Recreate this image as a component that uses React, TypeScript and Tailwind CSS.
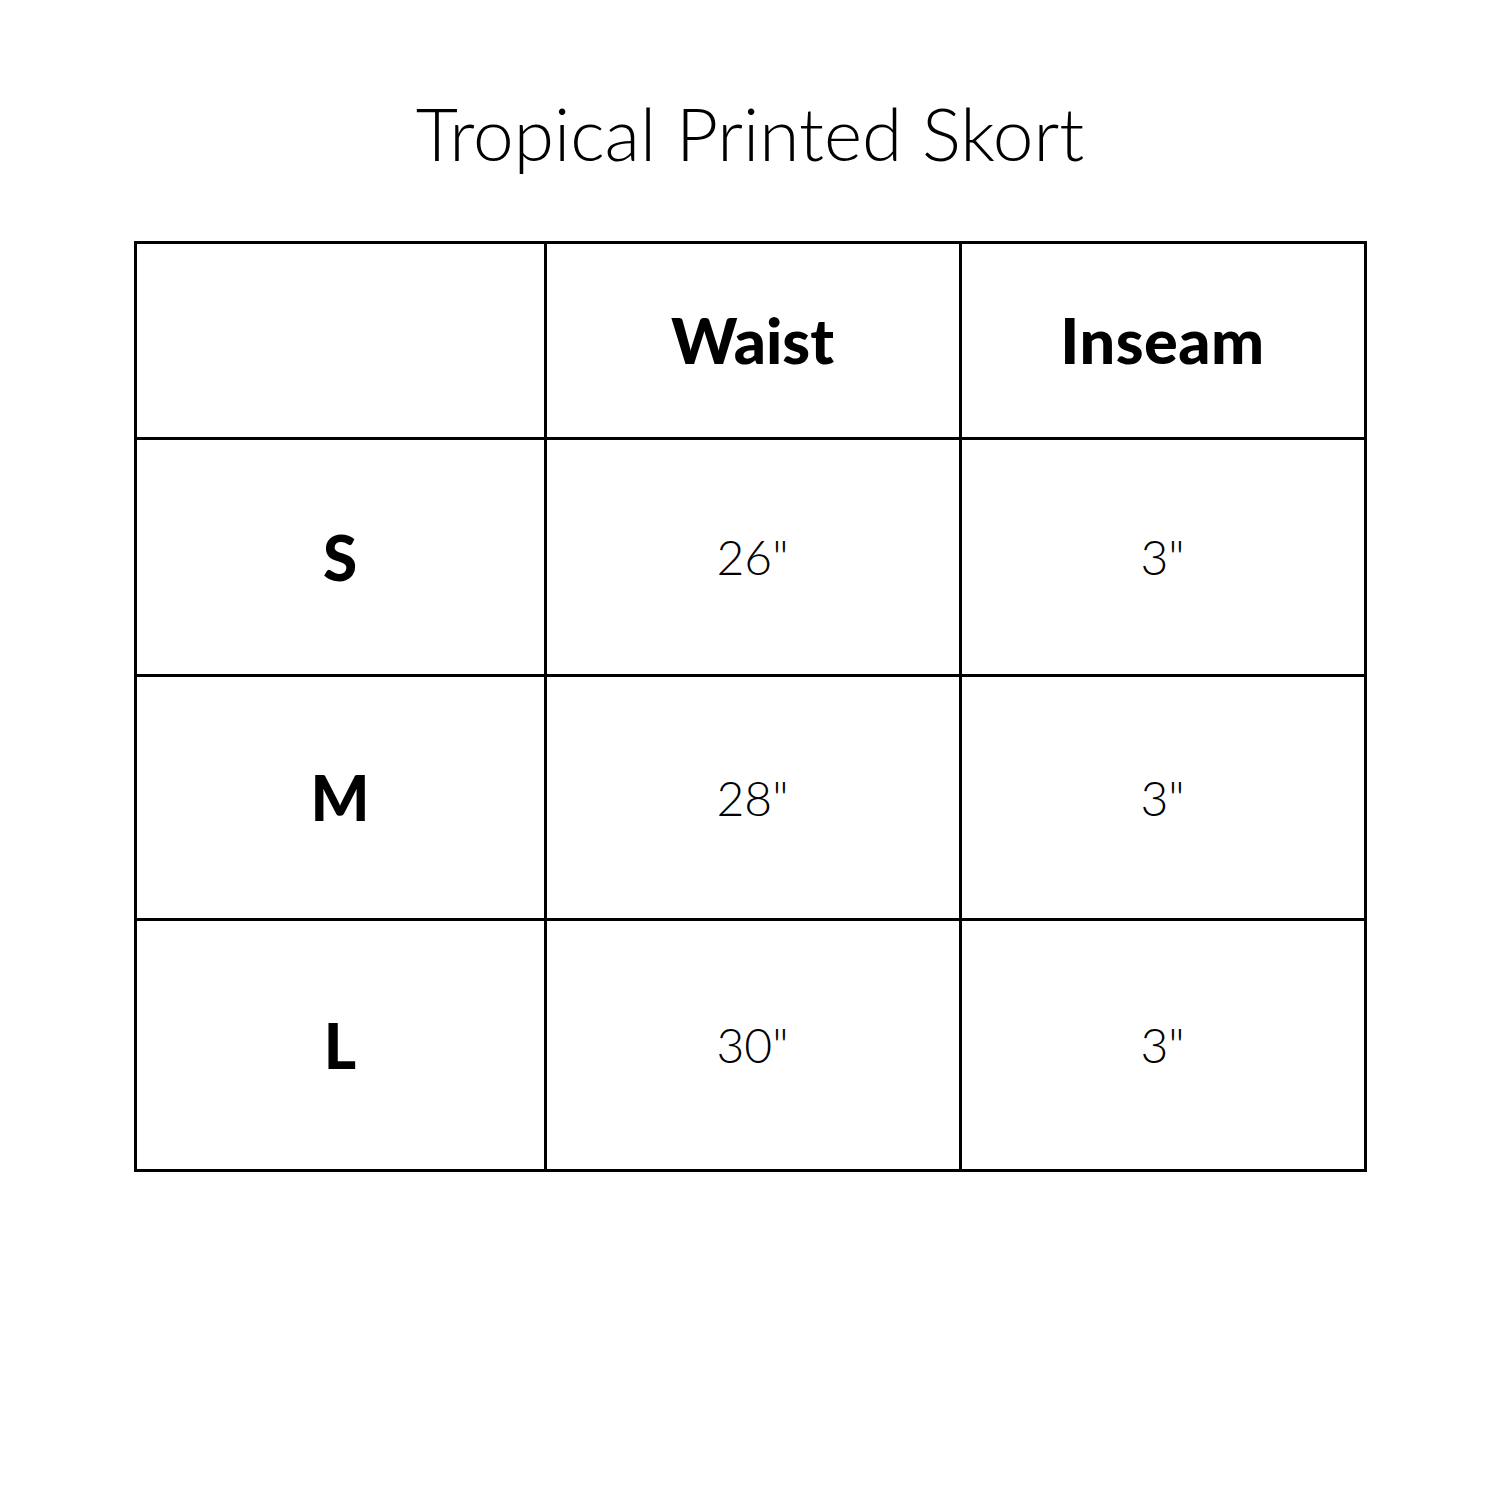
import React from 'react';

const rows = [
  { size: 'S', waist: '26"', inseam: '3"', h: 'h-[237px]' },
  { size: 'M', waist: '28"', inseam: '3"', h: 'h-[244px]' },
  { size: 'L', waist: '30"', inseam: '3"', h: 'h-[251px]' },
];

const cell = 'flex items-center justify-center border-r-[3px] border-b-[3px] border-black';

const App: React.FC = () => {
  return (
    <div className="w-[1500px] h-[1500px] bg-white flex flex-col items-center text-black font-['Lato',sans-serif]">
      {/* Title */}
      <h1 className="pt-[97px] mb-[71px] text-[73px] leading-none font-light">
        Tropical Printed Skort
      </h1>

      {/* Size chart */}
      <div className="grid grid-cols-[410px_415px_405px] border-l-[3px] border-t-[3px] border-black">
        <div className={`${cell} h-[196px]`} />
        <div className={`${cell} h-[196px] text-[63px] font-black`}>Waist</div>
        <div className={`${cell} h-[196px] text-[63px] font-black tracking-[0.5px]`}>Inseam</div>

        {rows.map((r) => (
          <React.Fragment key={r.size}>
            <div className={`${cell} ${r.h} text-[62px] font-black`}>{r.size}</div>
            <div className={`${cell} ${r.h} text-[48px] font-light`}>{r.waist}</div>
            <div className={`${cell} ${r.h} text-[48px] font-light`}>{r.inseam}</div>
          </React.Fragment>
        ))}
      </div>
    </div>
  );
};

export default App;
